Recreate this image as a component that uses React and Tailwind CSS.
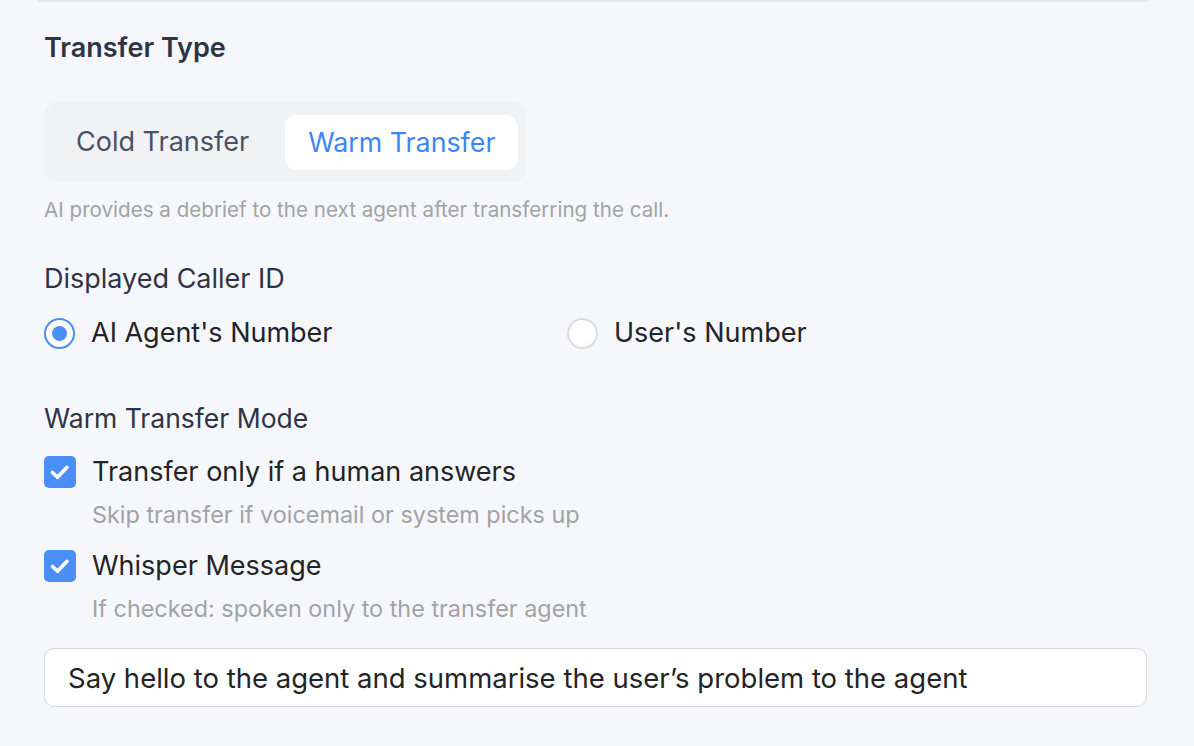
import React, { useState } from 'react';

const Radio = ({ checked, label, onClick }) => (
  <button onClick={onClick} className="flex items-center gap-[16px] h-[32px]">
    <span
      className={`flex items-center justify-center w-[31px] h-[31px] rounded-full bg-white ${
        checked ? 'border-[2.5px] border-[#4a8ef6]' : 'border-2 border-[#dcdcdc]'
      }`}
    >
      {checked && <span className="w-[15px] h-[15px] rounded-full bg-[#4a8ef6]" />}
    </span>
    <span className="text-[27px] leading-[32px] text-[#222426]">{label}</span>
  </button>
);

const Checkbox = ({ label, hint }) => (
  <div className="flex flex-col">
    <div className="flex items-center gap-[16px] h-[32px]">
      <span className="w-[32px] h-[32px] rounded-[5px] bg-[#4a8ef6]">
        <svg width="32" height="32" viewBox="0 0 32 32" fill="none">
          <path d="M8.5 16.5l5 4.8 9.5-10" stroke="white" strokeWidth="3.6" strokeLinecap="round" strokeLinejoin="round" />
        </svg>
      </span>
      <span className="text-[27px] leading-[32px] text-[#222426]">{label}</span>
    </div>
    <p className="pl-[48px] mt-[13px] text-[23.4px] leading-[28px] text-[#a3a3a3]">{hint}</p>
  </div>
);

export default function App() {
  const [type, setType] = useState('warm');
  const [caller, setCaller] = useState('agent');

  return (
    <div
      className="w-[1194px] h-[746px] bg-[#f6f7fb] overflow-hidden"
      style={{ fontFamily: 'Inter, "Noto Sans", sans-serif' }}
    >
      <div className="ml-[44px] w-[1104px]">
        <div className="h-[2px] bg-[#e5e6eb] -ml-[6px] w-[1110px]" />

        {/* Transfer Type */}
        <h2 className="mt-[30px] text-[27px] font-semibold text-[#2e3446] leading-[32px]">Transfer Type</h2>

        <div className="mt-[38px] inline-flex items-center gap-[12px] h-[80px] px-[8px] rounded-[14px] bg-[#f1f2f4]">
          <button
            onClick={() => setType('cold')}
            className={`h-[55px] px-[24px] rounded-[12px] text-[27px] ${
              type === 'cold' ? 'bg-white text-[#3e86f5]' : 'text-[#4a5166]'
            }`}
          >
            Cold Transfer
          </button>
          <button
            onClick={() => setType('warm')}
            className={`h-[55px] px-[23px] rounded-[12px] text-[26.8px] ${
              type === 'warm' ? 'bg-white text-[#3e86f5]' : 'text-[#4a5166]'
            }`}
          >
            Warm Transfer
          </button>
        </div>

        <p className="mt-[16px] text-[20.6px] text-[#a3a3a3] leading-[24px]">
          AI provides a debrief to the next agent after transferring the call.
        </p>

        {/* Displayed Caller ID */}
        <h3 className="mt-[41px] text-[27px] text-[#2e3446] leading-[32px]">Displayed Caller ID</h3>
        <div className="mt-[22px] grid grid-cols-2 w-[1046px]">
          <Radio checked={caller === 'agent'} label="AI Agent's Number" onClick={() => setCaller('agent')} />
          <Radio checked={caller === 'user'} label="User's Number" onClick={() => setCaller('user')} />
        </div>

        {/* Warm Transfer Mode */}
        <h3 className="mt-[53px] text-[26.5px] text-[#2e3446] leading-[32px]">Warm Transfer Mode</h3>
        <div className="mt-[22px] flex flex-col gap-[21px]">
          <Checkbox label="Transfer only if a human answers" hint="Skip transfer if voicemail or system picks up" />
          <Checkbox label="Whisper Message" hint="If checked: spoken only to the transfer agent" />
        </div>

        <input
          className="block mt-[25px] w-[1103px] h-[59px] px-[23px] rounded-[10px] border-[1.5px] border-[#d7d7d9] bg-white text-[27.5px] text-[#222426] outline-none"
          defaultValue="Say hello to the agent and summarise the user’s problem to the agent"
        />
      </div>
    </div>
  );
}
